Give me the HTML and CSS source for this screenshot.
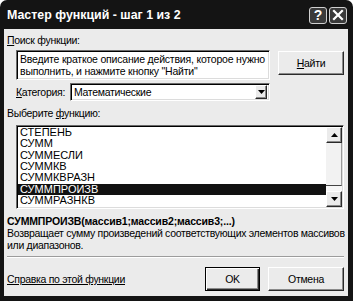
FILE: index.html
```html
<!DOCTYPE html>
<html lang="ru">
<head>
<meta charset="utf-8">
<title>Мастер функций</title>
<link rel="stylesheet" href="styles.css">
</head>
<body>
<div class="window">
  <div class="titlebar">
    <span class="title">Мастер функций - шаг 1 из 2</span>
    <div class="caption-buttons">
      <span class="cap-btn help-btn">?</span>
      <span class="cap-btn close-btn">
        <svg width="12" height="12" viewBox="0 0 12 12"><path d="M2 2 L10 10 M10 2 L2 10" stroke="#fff" stroke-width="2.2" stroke-linecap="square"/></svg>
      </span>
    </div>
  </div>
  <div class="client">
    <div class="label"><u>П</u>оиск функции:</div>
    <div class="search-row">
      <div class="textarea">Введите краткое описание действия, которое нужно<br>выполнить, и нажмите кнопку "Найти"</div>
      <div class="btn btn-find"><u>Н</u>айти</div>
    </div>
    <div class="category-row">
      <span class="label cat-label"><u>К</u>атегория:</span>
      <div class="select">
        <span class="select-value">Математические</span>
        <span class="drop-btn"><svg width="7" height="4" viewBox="0 0 7 4"><path d="M0 0 H7 L3.5 4 Z" fill="#000"/></svg></span>
      </div>
    </div>
    <div class="label choose">Выберите <u>ф</u>ункцию:</div>
    <div class="listbox">
      <ul class="items">
        <li>СТЕПЕНЬ</li>
        <li>СУММ</li>
        <li>СУММЕСЛИ</li>
        <li>СУММКВ</li>
        <li>СУММКВРАЗН</li>
        <li class="selected">СУММПРОИЗВ</li>
        <li>СУММРАЗНКВ</li>
      </ul>
      <div class="scrollbar">
        <span class="sb-btn"><svg width="7" height="4" viewBox="0 0 7 4"><path d="M0 4 H7 L3.5 0 Z" fill="#000"/></svg></span>
        <span class="sb-track"><span class="sb-thumb"></span></span>
        <span class="sb-btn"><svg width="7" height="4" viewBox="0 0 7 4"><path d="M0 0 H7 L3.5 4 Z" fill="#000"/></svg></span>
      </div>
    </div>
    <div class="signature">СУММПРОИЗВ(массив1;массив2;массив3;...)</div>
    <div class="desc">Возвращает сумму произведений соответствующих элементов массивов<br>или диапазонов.</div>
    <div class="separator"></div>
    <div class="footer">
      <a class="help-link">Справка по этой функции</a>
      <div class="btn btn-ok">OK</div>
      <div class="btn btn-cancel">Отмена</div>
    </div>
  </div>
</div>
</body>
</html>
```

FILE: styles.css
```css
* { box-sizing: border-box; }
html, body { margin: 0; padding: 0; background: #fff; }
body {
  font-family: "Liberation Sans", Arial, sans-serif;
  font-size: 10.5px;
  letter-spacing: -0.3px;
  color: #000;
}
.window {
  width: 353px;
  height: 301px;
  background: #141414;
  border-radius: 7px 7px 0 0;
  padding: 0 5px 5px 4px;
  display: flex;
  flex-direction: column;
}
.titlebar {
  height: 29px;
  flex: none;
  display: flex;
  align-items: center;
  padding: 1px 1px 0 3px;
}
.title {
  color: #fff;
  font-weight: bold;
  font-size: 12.4px;
  letter-spacing: 0;
  flex: 1;
  white-space: nowrap;
}
.caption-buttons { display: flex; gap: 2px; }
.cap-btn {
  width: 18px;
  height: 17px;
  border: 1px solid #d0d0d0;
  border-radius: 3px;
  background: #3a3a3a;
  color: #fff;
  display: flex;
  align-items: center;
  justify-content: center;
  font-weight: bold;
  font-size: 14px;
  letter-spacing: 0;
  line-height: 1;
}
.client {
  flex: 1;
  background: #ebebeb;
  padding: 5px 4px 0 3px;
  display: flex;
  flex-direction: column;
}
.label { line-height: 13px; white-space: nowrap; }
.search-row {
  display: flex;
  align-items: flex-start;
  margin-top: 3px;
  padding-left: 9px;
}
.textarea {
  width: 254px;
  height: 30px;
  background: #fff;
  border: 1px solid;
  border-color: #6a6a6a #fff #fff #6a6a6a;
  box-shadow: inset 1px 1px #000, inset -1px -1px #dcdcdc;
  padding: 2px 3px;
  line-height: 12px;
  letter-spacing: -0.2px;
  white-space: nowrap;
}
.btn {
  height: 24px;
  background: #ebebeb;
  border: 1px solid;
  border-color: #fff #2a2a2a #2a2a2a #fff;
  box-shadow: inset -1px -1px #8a8a8a;
  display: flex;
  align-items: center;
  justify-content: center;
}
.btn-find {
  width: 66px;
  margin-left: 8px;
  margin-top: 1px;
}
.category-row {
  display: flex;
  align-items: center;
  margin-top: 3px;
  padding-left: 9px;
  height: 18px;
}
.cat-label { width: 54px; }
.select {
  width: 200px;
  height: 18px;
  background: #fff;
  border: 1px solid;
  border-color: #6a6a6a #fff #fff #6a6a6a;
  box-shadow: inset 1px 1px #000, inset -1px -1px #dcdcdc;
  display: flex;
  align-items: center;
  padding: 0 2px 0 3px;
}
.select-value { flex: 1; }
.drop-btn {
  width: 12px;
  height: 14px;
  background: #ebebeb;
  border: 1px solid;
  border-color: #fff #2a2a2a #2a2a2a #fff;
  box-shadow: inset -1px -1px #8a8a8a;
  display: flex;
  align-items: center;
  justify-content: center;
}
.choose { margin-top: 6px; }
.listbox {
  margin: 5px 0 0 9px;
  width: 328px;
  height: 84px;
  background: #fff;
  border: 1px solid;
  border-color: #6a6a6a #fff #fff #6a6a6a;
  box-shadow: inset 1px 1px #000, inset -1px -1px #dcdcdc;
  padding: 1px;
  display: flex;
}
.items {
  list-style: none;
  margin: 0;
  padding: 0;
  flex: 1;
}
.items li {
  height: 11.33px;
  line-height: 11.33px;
  padding-left: 2px;
  font-size: 11px;
  letter-spacing: 0;
  white-space: nowrap;
}
.items li.selected { background: #111; color: #fff; }
.scrollbar {
  width: 16px;
  display: flex;
  flex-direction: column;
  background: #f6f6f6;
}
.sb-btn {
  height: 16px;
  background: #ebebeb;
  border: 1px solid;
  border-color: #fff #2a2a2a #2a2a2a #fff;
  box-shadow: inset -1px -1px #8a8a8a;
  display: flex;
  align-items: center;
  justify-content: center;
}
.sb-track { flex: 1; display: flex; flex-direction: column; }
.sb-thumb {
  height: 43px;
  border-right: 1px solid #9a9a9a;
  border-bottom: 1px solid #444;
  background: #f2f2f2;
}
.signature {
  margin-top: 6px;
  font-weight: bold;
  letter-spacing: -0.15px;
  line-height: 12px;
  white-space: nowrap;
}
.desc { line-height: 12px; white-space: nowrap; }
.separator {
  margin-top: 5px;
  height: 2px;
  border-top: 1px solid #9c9c9c;
  border-bottom: 1px solid #fff;
}
.footer {
  margin-top: 9px;
  height: 24px;
  display: flex;
  align-items: center;
}
.help-link {
  text-decoration: underline;
  color: #000;
  margin-right: auto;
  white-space: nowrap;
}
.btn-ok {
  width: 55px;
  border-color: #000;
  box-shadow: inset 1px 1px #fff, inset -1px -1px #2a2a2a, inset -2px -2px #8a8a8a;
}
.btn-cancel {
  width: 76px;
  margin-left: 8px;
}
```
